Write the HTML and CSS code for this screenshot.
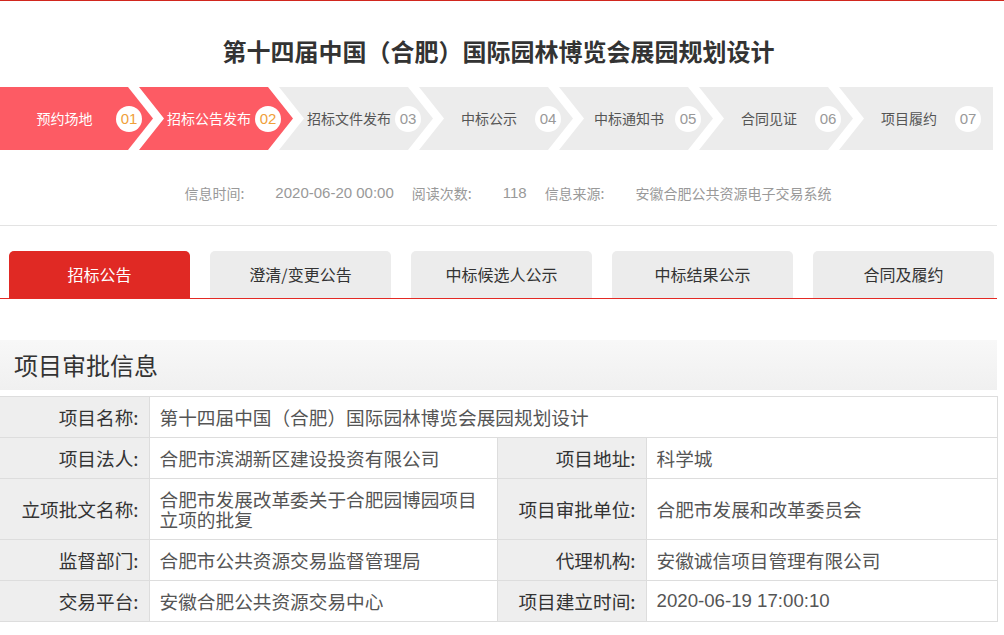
FILE: index.html
```html
<!DOCTYPE html>
<html lang="zh-CN">
<head>
<meta charset="utf-8">
<title>第十四届中国（合肥）国际园林博览会展园规划设计</title>
<link rel="stylesheet" href="styles.css">
</head>
<body>
<div class="topline"></div>
<div class="page">
  <h1 class="title">第十四届中国（合肥）国际园林博览会展园规划设计</h1>

  <div class="steps">
    <div class="step step-first active"><span class="step-name">预约场地</span><span class="step-num">01</span></div>
    <div class="step active"><span class="step-name">招标公告发布</span><span class="step-num">02</span></div>
    <div class="step"><span class="step-name">招标文件发布</span><span class="step-num">03</span></div>
    <div class="step"><span class="step-name">中标公示</span><span class="step-num">04</span></div>
    <div class="step"><span class="step-name">中标通知书</span><span class="step-num">05</span></div>
    <div class="step"><span class="step-name">合同见证</span><span class="step-num">06</span></div>
    <div class="step step-last"><span class="step-name">项目履约</span><span class="step-num">07</span></div>
  </div>

  <div class="meta">
    <span class="meta-label">信息时间:</span><span class="meta-value num">2020-06-20 00:00</span>
    <span class="meta-label">阅读次数:</span><span class="meta-value num">118</span>
    <span class="meta-label">信息来源:</span><span class="meta-value">安徽合肥公共资源电子交易系统</span>
  </div>

  <div class="divider"></div>

  <div class="tabs">
    <div class="tab tab-active">招标公告</div>
    <div class="tab">澄清/变更公告</div>
    <div class="tab">中标候选人公示</div>
    <div class="tab">中标结果公示</div>
    <div class="tab">合同及履约</div>
  </div>

  <div class="section-head">项目审批信息</div>

  <table class="info">
    <colgroup>
      <col class="c-label">
      <col class="c-value">
      <col class="c-label">
      <col class="c-value2">
    </colgroup>
    <tr>
      <th>项目名称:</th>
      <td colspan="3">第十四届中国（合肥）国际园林博览会展园规划设计</td>
    </tr>
    <tr>
      <th>项目法人:</th>
      <td>合肥市滨湖新区建设投资有限公司</td>
      <th>项目地址:</th>
      <td>科学城</td>
    </tr>
    <tr>
      <th>立项批文名称:</th>
      <td>合肥市发展改革委关于合肥园博园项目立项的批复</td>
      <th>项目审批单位:</th>
      <td>合肥市发展和改革委员会</td>
    </tr>
    <tr>
      <th>监督部门:</th>
      <td>合肥市公共资源交易监督管理局</td>
      <th>代理机构:</th>
      <td>安徽诚信项目管理有限公司</td>
    </tr>
    <tr>
      <th>交易平台:</th>
      <td>安徽合肥公共资源交易中心</td>
      <th>项目建立时间:</th>
      <td class="num">2020-06-19 17:00:10</td>
    </tr>
  </table>
</div>
</body>
</html>
```

FILE: styles.css
```css
* { box-sizing: border-box; }

html, body {
  margin: 0;
  padding: 0;
  background: #fff;
}

body {
  font-family: "Microsoft YaHei", "Noto Sans CJK SC", "Noto Sans", sans-serif;
  color: #333;
}

.topline {
  height: 1px;
  background: #d1271e;
}

.page {
  width: 997px;
}

.title {
  margin: 34px 0 20px;
  font-size: 24px;
  line-height: 32px;
  font-weight: bold;
  text-align: center;
  color: #333;
}

/* process steps */
.steps {
  display: flex;
  height: 63px;
}

.step {
  flex: 0 0 154px;
  width: 154px;
  height: 63px;
  margin-left: -14px;
  display: flex;
  align-items: center;
  background: #ececec;
  color: #555;
  font-size: 14px;
  clip-path: polygon(0 0, 129px 0, 154px 50%, 129px 100%, 0 100%, 25px 50%);
}

.step-first {
  flex-basis: 153px;
  width: 153px;
  margin-left: 0;
  clip-path: polygon(0 0, 128px 0, 153px 50%, 128px 100%, 0 100%);
}

.step-last {
  clip-path: polygon(0 0, 100% 0, 100% 100%, 0 100%, 25px 50%);
}

.step.active {
  background: #fd5b64;
  color: #fff;
}

.step-name {
  width: 116px;
  padding-left: 24px;
  text-align: center;
  white-space: nowrap;
  line-height: 20px;
  margin-top: -2px;
}

.step-first .step-name {
  padding-left: 13px;
}

.step-num {
  width: 26px;
  height: 26px;
  border-radius: 50%;
  background: #fff;
  color: #999;
  font-size: 15px;
  line-height: 26px;
  text-align: center;
  font-family: "Liberation Sans", Arial, sans-serif;
}

.step.active .step-num {
  color: #f0a03a;
}

/* meta line */
.meta {
  margin-top: 33px;
  display: flex;
  justify-content: center;
  padding-left: 19px;
  font-size: 14px;
  line-height: 20px;
  color: #999;
}

.meta-label {
  margin-right: 31px;
}

.meta-value {
  margin-right: 18px;
}

.meta-value:last-child {
  margin-right: 0;
}

.meta .num {
  font-family: "Liberation Sans", Arial, sans-serif;
  font-size: 15px;
}

.divider {
  margin-top: 22px;
  height: 1px;
  background: #e3e3e3;
}

/* tabs */
.tabs {
  margin-top: 25px;
  display: flex;
  gap: 20px;
  padding-left: 9px;
  border-bottom: 1px solid #e32a24;
}

.tab {
  flex: 0 0 181px;
  height: 47px;
  border-radius: 5px 5px 0 0;
  background: #ececec;
  color: #333;
  font-size: 16px;
  line-height: 47px;
  text-align: center;
}

.tab-active {
  background: #e02924;
  color: #fff;
}

/* section */
.section-head {
  margin-top: 41px;
  height: 50px;
  padding-left: 14px;
  background: linear-gradient(to bottom, #f8f8f8, #f0f0f0);
  font-size: 24px;
  line-height: 50px;
  color: #333;
}

.info {
  margin-top: 6px;
  width: 997px;
  border-collapse: collapse;
  table-layout: fixed;
  font-size: 18.67px;
  line-height: 20px;
}

.c-label { width: 149px; }
.c-value { width: 348px; }
.c-value2 { width: 351px; }

.info th,
.info td {
  border: 1px solid #dddddd;
  padding: 10px 10px;
  vertical-align: middle;
}

.info th {
  background: #eeeeee;
  font-weight: normal;
  text-align: right;
  color: #333;
  white-space: nowrap;
}

.info td {
  text-align: left;
  color: #555;
}

.info tr > th:first-child {
  border-left: none;
}

.info .num {
  font-family: "Liberation Sans", Arial, sans-serif;
}
```
